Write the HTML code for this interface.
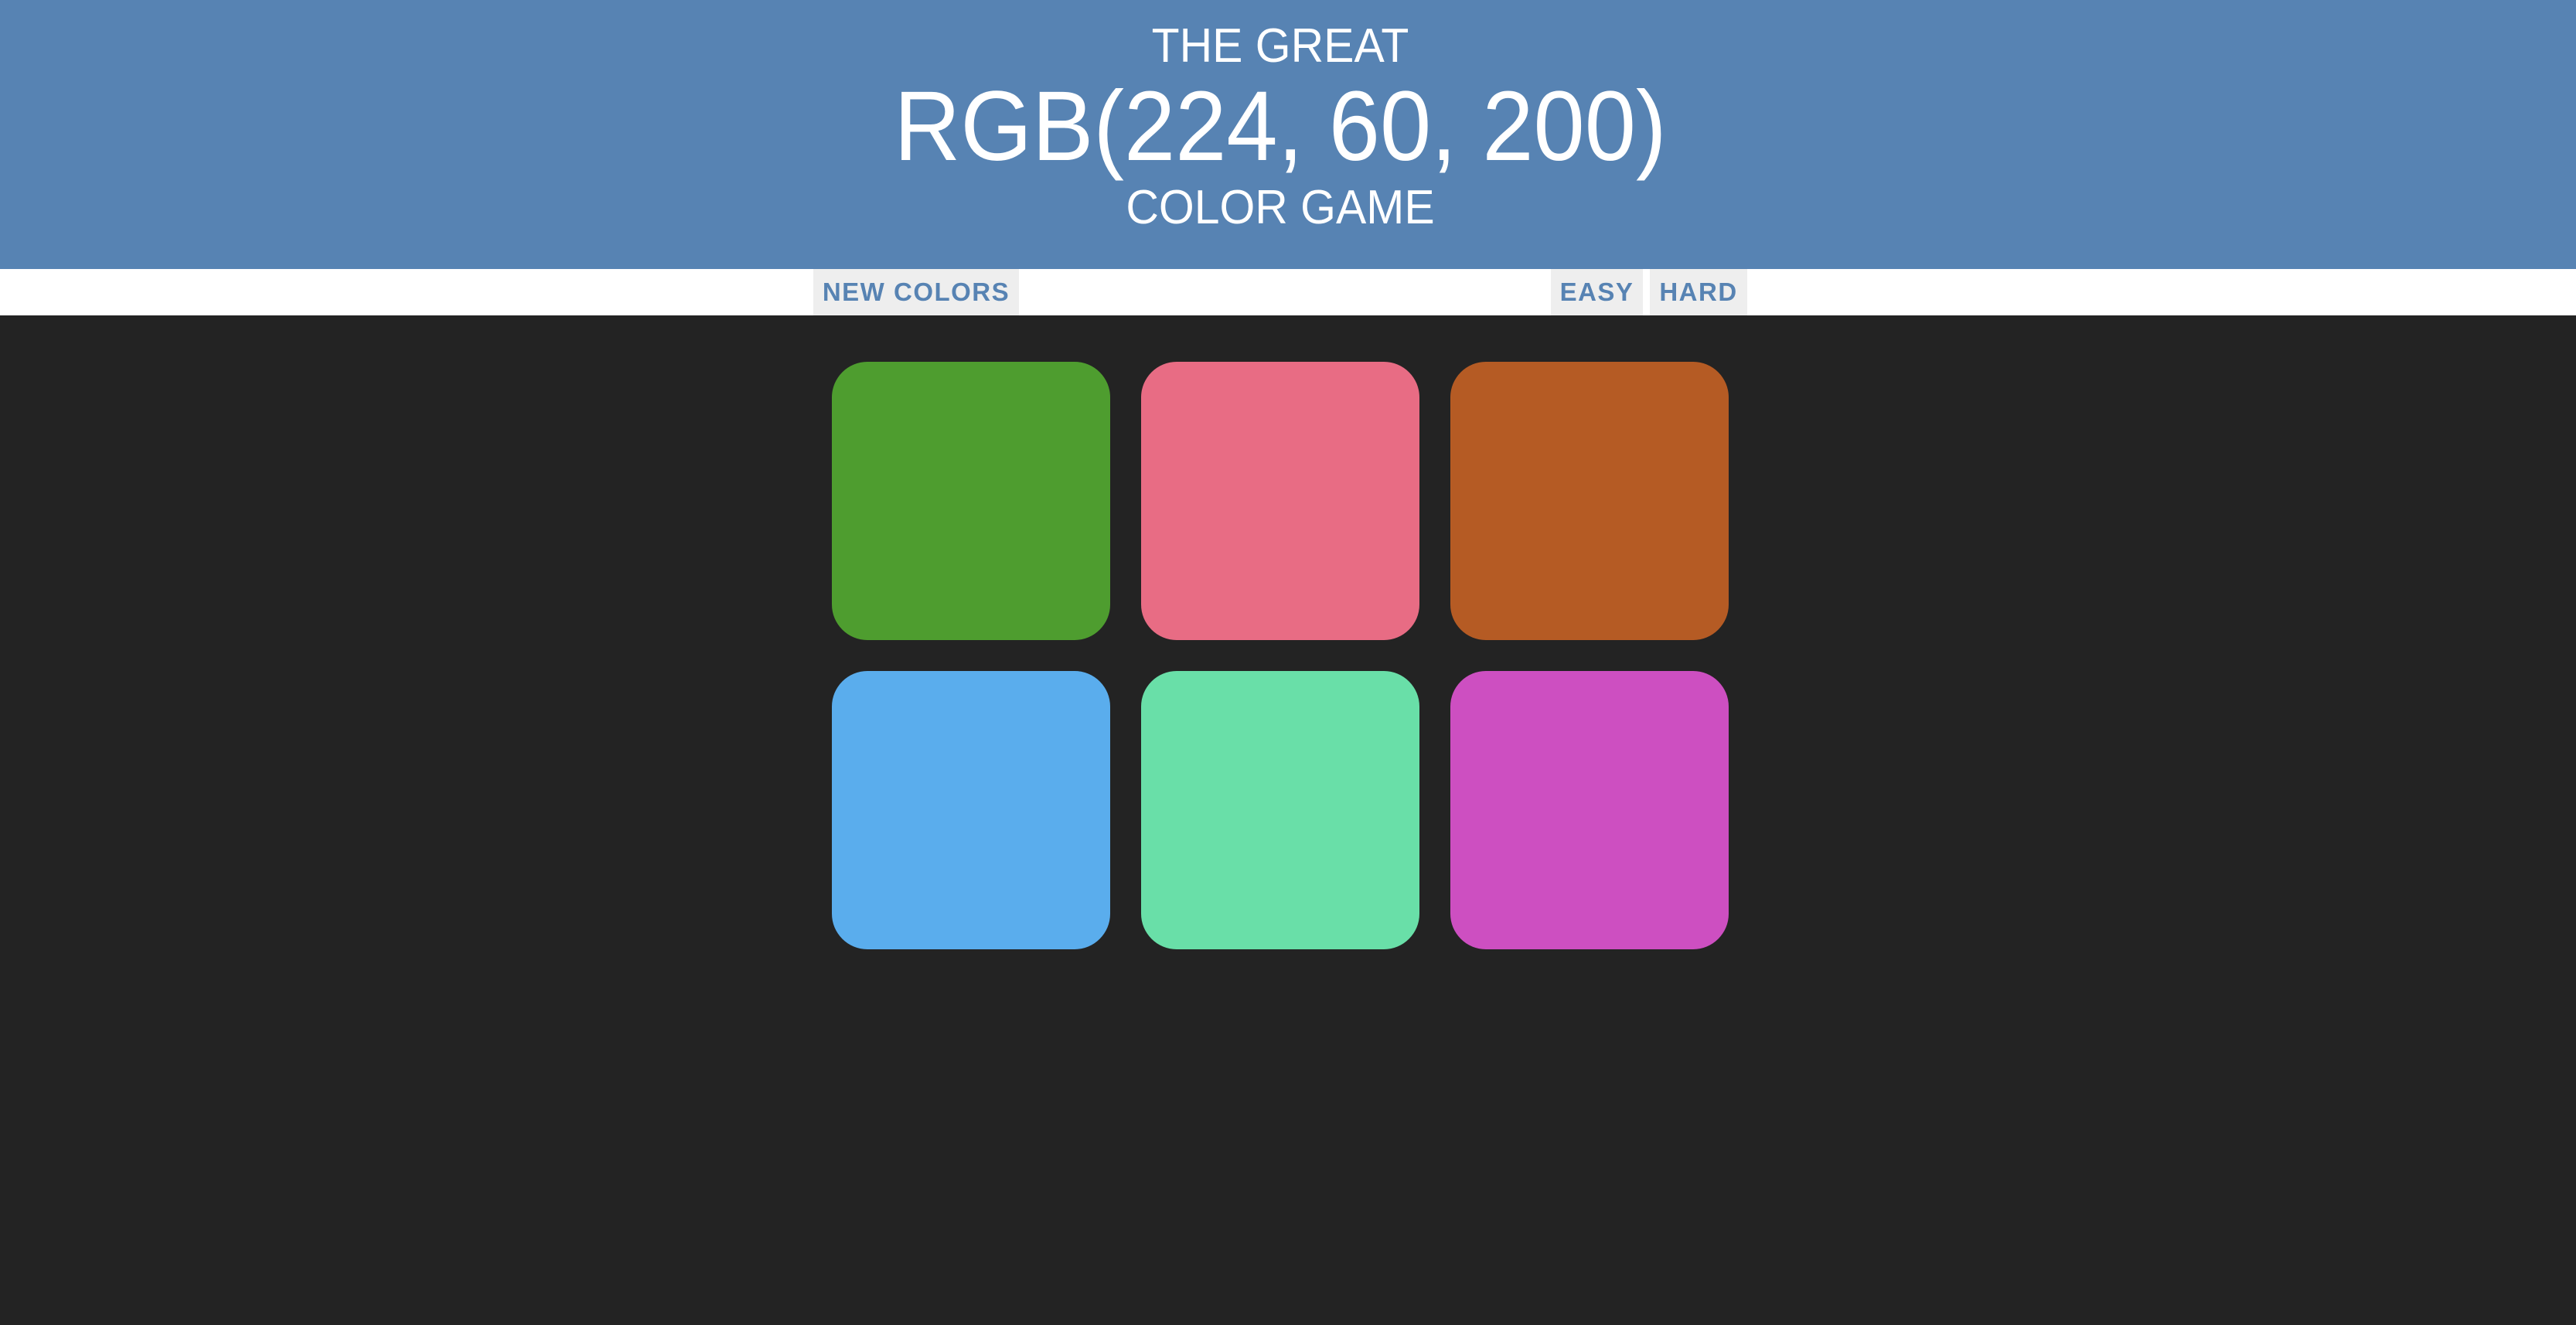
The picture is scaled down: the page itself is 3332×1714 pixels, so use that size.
<!DOCTYPE html>
<html><head><meta charset="utf-8"><style>
*{margin:0;padding:0;box-sizing:border-box}
html,body{width:3332px;height:1714px;background:#232323;overflow:hidden;font-family:"Liberation Sans",sans-serif}
#hdr{position:absolute;left:0;top:0;width:3332px;height:348px;background:#5783b3;color:#fff;text-align:center}
.t{position:absolute;left:0;width:3312px;text-align:center;white-space:nowrap;line-height:1}
#bar{position:absolute;left:0;top:348px;width:3332px;height:60px;background:#fff}
.btn{position:absolute;top:0;height:60px;background:#eee;color:#5783b3;font-weight:bold;font-size:33px;letter-spacing:1.5px;line-height:60px;text-align:center}
.sq{position:absolute;width:360px;height:360px;border-radius:46px}
</style></head><body>
<div id="hdr">
<div class="t" style="top:29px;font-size:62px;transform:scaleX(0.95)">THE GREAT</div>
<div class="t" style="top:100px;font-size:128px;transform:scaleX(0.93)">RGB(224, 60, 200)</div>
<div class="t" style="top:238px;font-size:62px;transform:scaleX(0.95)">COLOR GAME</div>
</div>
<div id="bar">
<div class="btn" style="left:1052px;width:266px">NEW COLORS</div>
<div class="btn" style="left:2006px;width:119px">EASY</div>
<div class="btn" style="left:2134px;width:126px">HARD</div>
</div>
<div class="sq" style="left:1076px;top:468px;background:#4e9d2f"></div>
<div class="sq" style="left:1476px;top:468px;background:#e86c84"></div>
<div class="sq" style="left:1876px;top:468px;background:#b55b24"></div>
<div class="sq" style="left:1076px;top:868px;background:#5aaded"></div>
<div class="sq" style="left:1476px;top:868px;background:#69dfa8"></div>
<div class="sq" style="left:1876px;top:868px;background:#cd4fc1"></div>
</body></html>
